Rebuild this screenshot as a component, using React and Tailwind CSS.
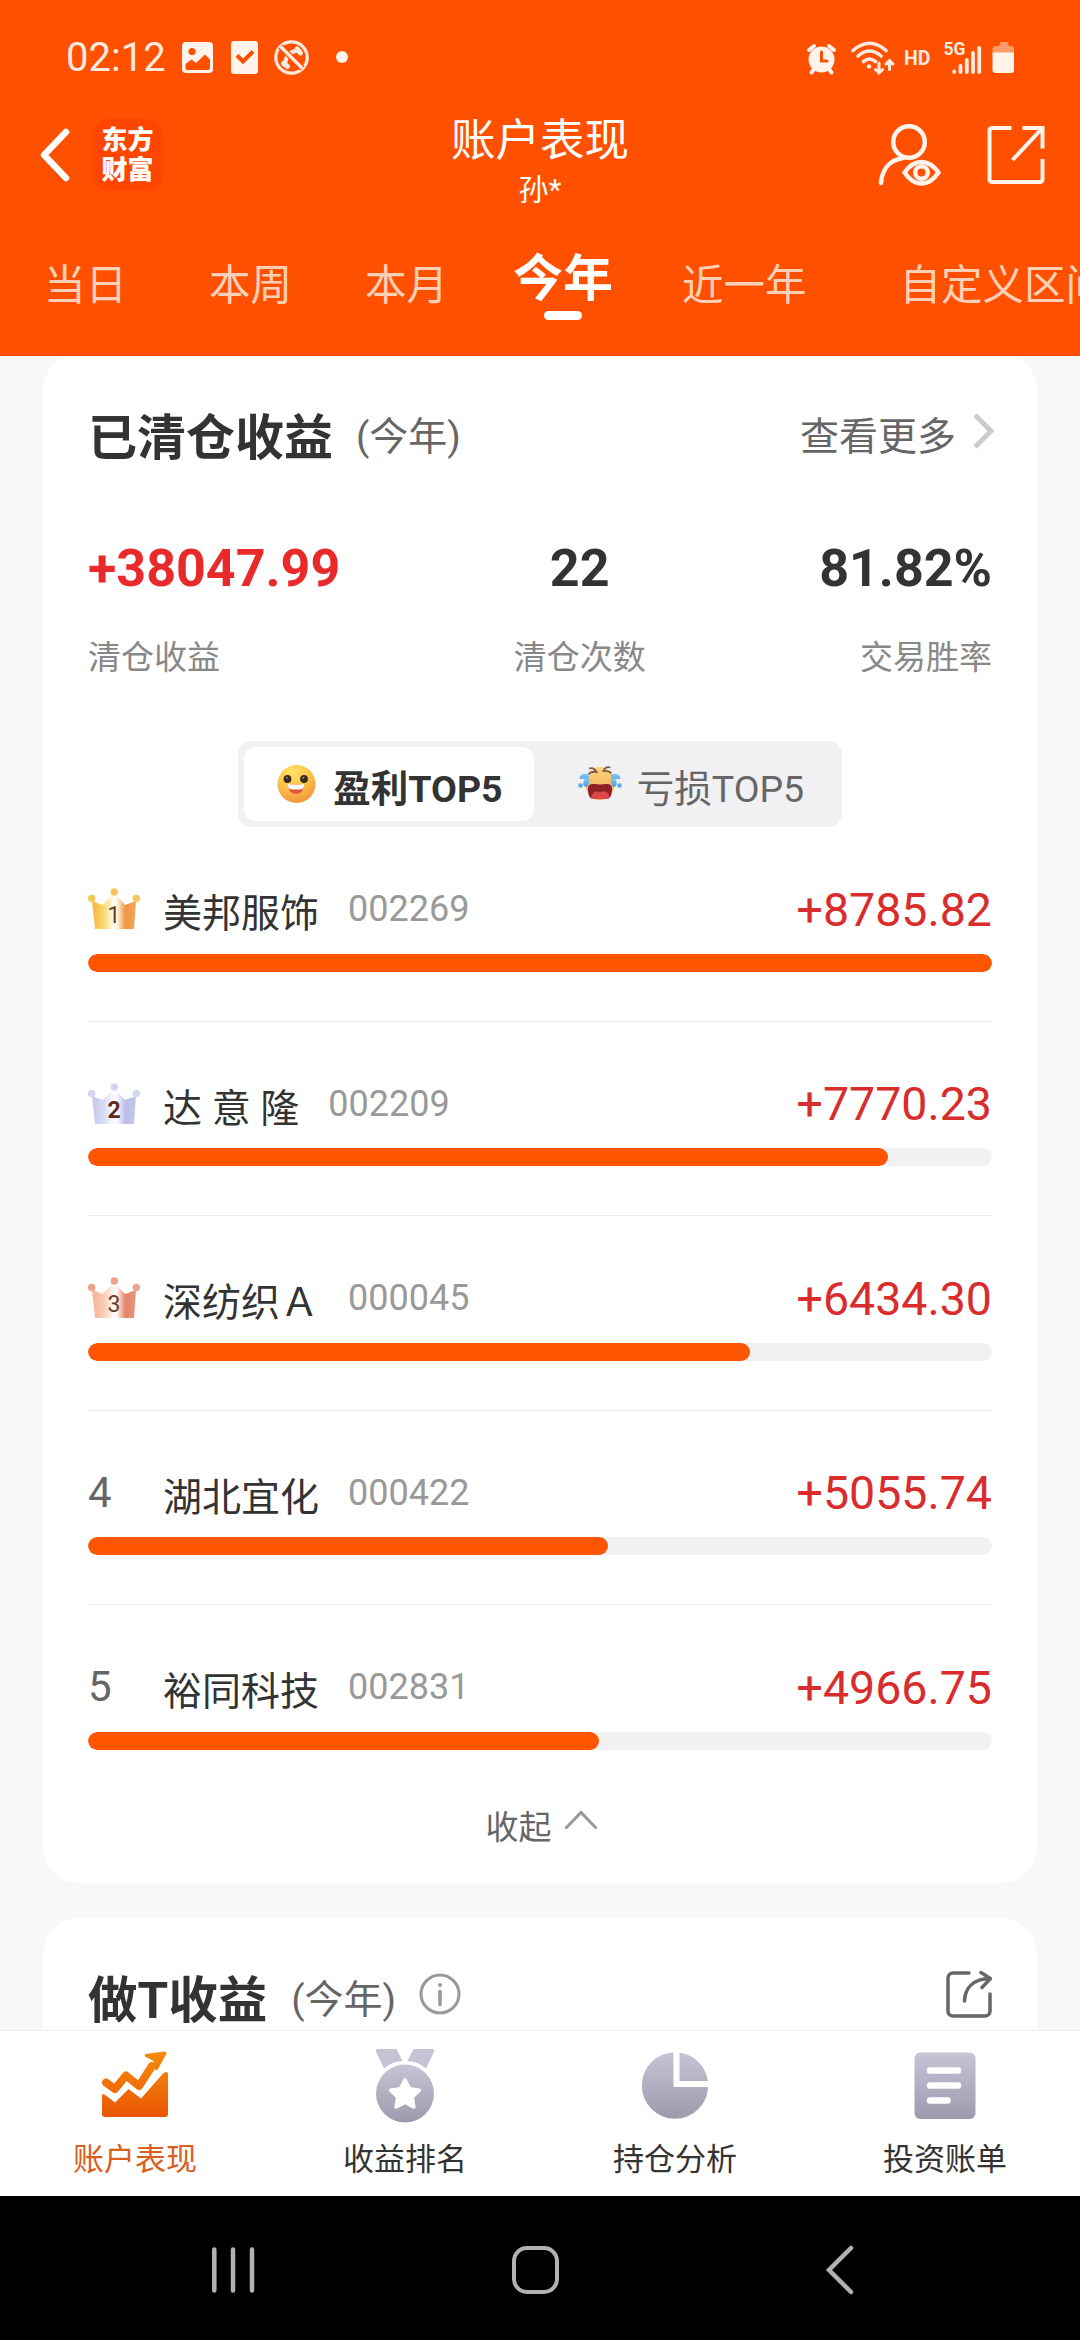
import clsx from 'clsx';

const tabs = [
  { label: '当日', className: 'ml-[44px]' },
  { label: '本周', className: 'ml-[82px]' },
  { label: '本月', className: 'ml-[73px]' },
  { label: '今年', className: 'ml-[65px]', active: true },
  { label: '近一年', className: 'ml-[69px]' },
  { label: '自定义区间', className: 'ml-[93px]' },
];

const summary = [
  { label: '清仓收益', value: '+38047.99', align: 'items-start', color: 'text-[#e92a2a]' },
  { label: '清仓次数', value: '22', align: 'items-center', color: 'text-[#333]' },
  { label: '交易胜率', value: '81.82%', align: 'items-end', color: 'text-[#333]' },
];

const stocks = [
  { name: '美邦服饰', code: '002269', profit: 8785.82 },
  { name: '达 意 隆', code: '002209', profit: 7770.23 },
  { name: '深纺织Ａ', code: '000045', profit: 6434.3 },
  { name: '湖北宜化', code: '000422', profit: 5055.74 },
  { name: '裕同科技', code: '002831', profit: 4966.75 },
];

const crowns = [
  { edge: '#f6b63c', soft: '#fbd873', mid: '#fffbe9', end: '#f0953f', ball: '#f5c65a', text: '#6b3a1f', weight: 400 },
  { edge: '#c3c8ea', soft: '#d9dcf4', mid: '#fbfbff', end: '#b9bde8', ball: '#d3d7f2', text: '#5a2a1c', weight: 700 },
  { edge: '#f5b293', soft: '#fbcdb4', mid: '#fff7f2', end: '#e58466', ball: '#eda48c', text: '#6b3a2c', weight: 400 },
];

function StatusIcons() {
  return (
    <svg width="210" height="44" viewBox="806 36 210 44" fill="none">
      {/* alarm */}
      <circle cx="821.5" cy="59.5" r="13" fill="#fff3ec" />
      <path d="M809 50l5-4M834 50l-5-4M811.500 72.500l3-4M831.500 72.500l-3-4" stroke="#fff3ec" strokeWidth="4" strokeLinecap="round" />
      <path d="M821.500 52v9h5.500" stroke="#ff5000" strokeWidth="3" strokeLinecap="round" />
      {/* wifi */}
      <g stroke="#ffeadf" strokeWidth="3.600" strokeLinecap="round">
        <path d="M853 50.500Q869.500 36 886 50.500" />
        <path d="M858 56Q869.500 46 881 56" />
        <path d="M863.500 61.500Q869.500 56.500 875.500 61.500" />
        <path d="M879 63v9.500M875.500 69.500l3.500 3.500 3.500-3.500M889.500 69.500V61M886 64l3.500-3.500L893 64" strokeWidth="3" />
      </g>
      <circle cx="869" cy="66.500" r="2.300" fill="#ffeadf" />
      <text x="904" y="65" fill="#ffeadf" fontFamily="Roboto" fontWeight="700" fontSize="19.500">HD</text>
      <text x="943.500" y="55" fill="#ffeadf" fontFamily="Roboto" fontWeight="700" fontSize="17.500">5G</text>
      <g stroke="#ffeadf" strokeWidth="3.800" strokeLinecap="round">
        <path d="M954.200 71.500v.5M960.500 66v6M966.800 60v12M973 53v19M979.200 48v24" />
      </g>
      {/* battery */}
      <path d="M999.500 46v-2a2 2 0 0 1 2-2h5a2 2 0 0 1 2 2v2h2.500a3 3 0 0 1 3 3v4h-21.500v-4a3 3 0 0 1 3-3z" fill="#ff9a6b" />
      <path d="M992.500 52.500H1014V70a3 3 0 0 1-3 3h-15.500a3 3 0 0 1-3-3z" fill="#fff3ec" />
    </svg>
  );
}

function NoticeIcons() {
  return (
    <svg width="168" height="38" viewBox="181 40 168 38" fill="none">
      <rect x="182" y="43" width="31" height="31" rx="4" fill="#fff3ec" />
      <circle cx="192" cy="52.500" r="3.600" fill="#ff5000" />
      <path d="M185.500 65l6-4.500 4.500 3.500 9-8.500 5 5V69a2 2 0 0 1-2 2h-20.500a2 2 0 0 1-2-2z" fill="#ff5000" />
      <rect x="231" y="42" width="27" height="33" rx="3" fill="#fff3ec" />
      <path d="M237 56.500l6 6 10-10" stroke="#ff5000" strokeWidth="4" />
      <circle cx="291.500" cy="58.500" r="15.700" stroke="#ffeadf" strokeWidth="3.200" />
      <path d="M285 67.500C285 57 290 51.500 300 51.500" stroke="#ffeadf" strokeWidth="4" />
      <path d="M283.500 64.500l4 3M297 50l3.500 4" stroke="#ffeadf" strokeWidth="5" strokeLinecap="round" />
      <path d="M280.500 47.500l22 22" stroke="#ff5000" strokeWidth="6" />
      <path d="M280.500 47.500l22 22" stroke="#ffeadf" strokeWidth="3.200" />
      <circle cx="342" cy="58" r="6" fill="#fff3ec" />
    </svg>
  );
}

function Crown({ rank }) {
  const c = crowns[rank - 1];
  const id = `crown${rank}`;
  return (
    <svg width="52" height="42" viewBox="0 0 52 42">
      <defs>
        <linearGradient id={id}>
          <stop offset="0" stopColor={c.edge} />
          <stop offset="0.280" stopColor={c.soft} />
          <stop offset="0.480" stopColor={c.mid} />
          <stop offset="0.560" stopColor={c.mid} />
          <stop offset="0.760" stopColor={c.end} />
          <stop offset="1" stopColor={c.end} stopOpacity="0.850" />
        </linearGradient>
      </defs>
      <path d="M4 13l11 4 11-12 11 12 11-4-2 28H7z" fill={`url(#${id})`} />
      <circle cx="3.700" cy="10.500" r="3.700" fill={c.ball} />
      <circle cx="26.300" cy="3.900" r="3.700" fill={c.ball} />
      <circle cx="48.300" cy="10.500" r="3.700" fill={c.ball} />
      <text x="26" y="34.500" textAnchor="middle" fontFamily="Roboto" fontSize="23" fontWeight={c.weight} fill={c.text}>{rank}</text>
    </svg>
  );
}

function HappyFace() {
  return (
    <svg width="39" height="40" viewBox="0 0 39 40">
      <defs>
        <radialGradient id="happy" cx="0.400" cy="0.200" r="0.850">
          <stop offset="0" stopColor="#ffe266" />
          <stop offset="0.500" stopColor="#fdc548" />
          <stop offset="1" stopColor="#f0903f" />
        </radialGradient>
      </defs>
      <circle cx="19.500" cy="20" r="19" fill="url(#happy)" />
      <circle cx="10.500" cy="15" r="3.900" fill="#3b2a1c" />
      <circle cx="27" cy="15" r="3.900" fill="#3b2a1c" />
      <circle cx="9.800" cy="13.800" r="1" fill="#a08a7a" />
      <circle cx="26.300" cy="13.800" r="1" fill="#a08a7a" />
      <path d="M11 20q8 1.500 16 0c0 6.500-3 9.800-8 9.800S11 26.500 11 20z" fill="#e2553a" />
      <path d="M11 20q8 1.500 16 0 .5 3-1.500 5-6.500 1-13 0Q10.500 23 11 20z" fill="#fff" />
    </svg>
  );
}

function CryFace() {
  return (
    <svg width="44" height="36" viewBox="0 0 44 36">
      <defs>
        <linearGradient id="cry" x2="0" y2="1">
          <stop offset="0" stopColor="#fbd27a" />
          <stop offset="1" stopColor="#f3a552" />
        </linearGradient>
        <linearGradient id="tear" x2="0" y2="1">
          <stop offset="0" stopColor="#84d0f8" />
          <stop offset="1" stopColor="#4a9de6" />
        </linearGradient>
      </defs>
      <ellipse cx="22" cy="17.500" rx="14.500" ry="16.500" fill="url(#cry)" />
      <path d="M11 2.500q5-1.500 7.500 3.500-5-1-8 2M32.500 1.500q-5-1.500-7 3.500 5-.5 8 2" fill="none" stroke="#7d5a4a" strokeWidth="1.800" />
      <path d="M10 22c0-3.500 3-4.500 6-4 3.500.5 8.500.5 12 0 3-.5 6 .5 6 4 0 5-1 10-3.500 10.500h-17C11 32 10 27 10 22z" fill="#8e2226" />
      <path d="M13 31c1-4 4-6 6.500-5.500q2.500 1.500 5 0C28 25 31 27 31.500 31q-1 2-3.500 2H16.500Q14 33 13 31z" fill="#dd4747" />
      <path d="M11 8.500C5 6.500 1.500 9 1.500 13c3-.5 7 .5 9 2z" fill="url(#tear)" />
      <path d="M33 8.500c6-2 9.500.5 9.500 4.500-3-.5-7 .5-9 2z" fill="url(#tear)" />
      <path d="M9.500 11c2.500 4 1.500 9-1.500 10-4-1-4-6 1.500-10zM34.500 11c-2.500 4-1.500 9 1.500 10 4-1 4-6-1.500-10z" fill="url(#tear)" />
      <circle cx="2.500" cy="19.500" r="2.300" fill="#5aa8ec" />
      <circle cx="41.500" cy="19.500" r="2.300" fill="#5aa8ec" />
    </svg>
  );
}

function StockRow({ stock, rank, last }) {
  const percent = (stock.profit / stocks[0].profit) * 100;
  return (
    <div className={clsx('pt-[57px]', !last && 'border-b border-[#ebebed] pb-[48.5px]')}>
      <div className="flex h-[50px] items-center">
        <div className="flex w-[75px] text-[42px] text-[#666]">
          {rank <= 3 ? <Crown rank={rank} /> : rank}
        </div>
        <span className="mt-[11px] text-[39px] whitespace-pre text-[#333]">{stock.name}</span>
        <span className="ml-[29px] text-[36px] text-[#999]">{stock.code}</span>
        <span className="mt-0.5 ml-auto text-[46.5px] text-[#d92c2c]">+{stock.profit.toFixed(2)}</span>
      </div>
      <div className="mt-[19.5px] mb-[0.5px] h-[18px] overflow-hidden rounded-full bg-[#f1f1f3]">
        <div className="h-full rounded-full bg-[#ff5500]" style={{ width: `${percent}%` }} />
      </div>
    </div>
  );
}

function NavGradient({ id, from = '#c6c5d6', to = '#9c9bad' }) {
  return (
    <linearGradient id={id} x2="0" y2="1">
      <stop offset="0" stopColor={from} />
      <stop offset="1" stopColor={to} />
    </linearGradient>
  );
}

const navItems = [
  {
    label: '账户表现',
    active: true,
    icon: (
      <svg width="68" height="74" viewBox="0 0 68 74">
        <defs>
          <linearGradient id="nav1" gradientUnits="userSpaceOnUse" x1="0" y1="3" x2="0" y2="69">
            <stop offset="0" stopColor="#f68c0c" />
            <stop offset="1" stopColor="#ea5504" />
          </linearGradient>
        </defs>
        <path d="M5 33.500L14 40 25 26.500 38 37 51 17" fill="none" stroke="url(#nav1)" strokeWidth="8" strokeLinecap="round" strokeLinejoin="round" />
        <path d="M44 7.500Q43 5 46 4.800L63 2.600Q66 2.500 65.300 5L57 20q-1.500 2-3 .5l-1.500-8.500z" fill="url(#nav1)" />
        <path d="M1 47q0-3 2.500-1.500L14 53.500 27.500 40 40 49.500 62.500 24q4.500-3 4.500 2V65a3 3 0 0 1-3 3H4a3 3 0 0 1-3-3z" fill="url(#nav1)" />
      </svg>
    ),
  },
  {
    label: '收益排名',
    icon: (
      <svg width="60" height="74" viewBox="0 0 60 74">
        <defs><NavGradient id="nav2" /></defs>
        <path d="M2.500 0H20a2 2 0 0 1 2 1l5.500 11Q16 12.500 9 19.500L.8 2.500Q.5 0 2.500 0zM57.500 0H40a2 2 0 0 0-2 1l-5.500 11Q44 12.500 51 19.500L59.200 2.500Q59.500 0 57.500 0z" fill="#c5c4d5" />
        <circle cx="30" cy="44.500" r="29" fill="url(#nav2)" />
        <path d="M30 30.500l4.700 9 10 1.600-7.100 7.200 1.500 10L30 53.700l-9.100 4.600 1.500-10-7.100-7.200 10-1.600z" fill="#fff" stroke="#fff" strokeWidth="3" strokeLinejoin="round" />
      </svg>
    ),
  },
  {
    label: '持仓分析',
    icon: (
      <svg width="68" height="74" viewBox="0 0 68 74">
        <defs><NavGradient id="nav3" /></defs>
        <circle cx="34" cy="36.500" r="33.200" fill="url(#nav3)" />
        <path d="M35.500 0v35H68" fill="none" stroke="#fff" strokeWidth="6" />
      </svg>
    ),
  },
  {
    label: '投资账单',
    icon: (
      <svg width="62" height="74" viewBox="0 0 62 74">
        <defs><NavGradient id="nav4" /></defs>
        <rect x="0.500" y="3.500" width="61" height="66.500" rx="6" fill="url(#nav4)" />
        <path d="M16 21.500h28M16 36.500h28M16 51.500h17.500" stroke="#fff" strokeWidth="6.500" strokeLinecap="round" />
      </svg>
    ),
  },
];

export default function App() {
  return (
    <div className="flex h-[2340px] w-[1080px] flex-col overflow-hidden bg-[#f6f8fa] font-['Roboto','Noto_Sans_CJK_SC',sans-serif] leading-none whitespace-nowrap">
      <header className="h-[356px] shrink-0 overflow-hidden bg-[#ff5000] text-white">
        <div className="flex h-[116px] items-center pr-[64px] pl-[66px]">
          <span className="w-[115px] text-[40px] text-[#ffeadf]">02:12</span>
          <NoticeIcons />
          <div className="ml-auto">
            <StatusIcons />
          </div>
        </div>

        <div className="grid h-[92px] grid-cols-[1fr_auto_1fr] items-start">
          <div className="flex h-[78px] items-center gap-[22px] pl-[39px]">
            <svg width="31" height="54" viewBox="0 0 31 54" fill="none">
              <path d="M27 4L5 27l22 23" stroke="#fff" strokeWidth="6.500" strokeLinecap="round" strokeLinejoin="round" />
            </svg>
            <div className="flex h-[72px] w-[71px] flex-col items-center justify-center rounded-[16px] bg-[#ff4600] text-[26px] leading-[30px] font-black">
              <span>东方</span>
              <span>财富</span>
            </div>
          </div>
          <div className="flex flex-col items-center">
            <h1 className="pt-[1.5px] text-[44.5px] leading-[46px]">账户表现</h1>
            <p className="mt-2 text-[30px] leading-[36px]">孙*</p>
          </div>
          <div className="flex h-[78px] items-center justify-end gap-[46px] pr-[35px]">
            <svg width="63" height="62" viewBox="878 123 63 62" fill="none" stroke="#fff3ec" strokeWidth="4.500" strokeLinecap="round">
              <circle cx="909" cy="141" r="15.800" />
              <path d="M881 182C882 169 889 159 903 157" />
              <path d="M904.500 171.500Q912 161 921.500 161T938.500 171.500Q931 182.500 921.500 182.500T904.500 171.500z" strokeLinejoin="round" />
              <circle cx="921.500" cy="171.500" r="6.300" />
            </svg>
            <svg width="58" height="60" viewBox="0 0 58 60" fill="none" stroke="#fff3ec" strokeWidth="4">
              <path d="M24.500 3H5a2.500 2.500 0 0 0-2.500 2.500v49A2.500 2.500 0 0 0 5 57H53a2.500 2.500 0 0 0 2.500-2.500V34M35.500 3h20v20.500M55 3.500L25.500 35" />
            </svg>
          </div>
        </div>

        <nav className="flex items-start">
          {tabs.map((tab) =>
            tab.active ? (
              <div key={tab.label} className={clsx('flex shrink-0 flex-col items-center pt-[47px]', tab.className)}>
                <span className="text-[50px] leading-[48px] font-bold">{tab.label}</span>
                <span className="mt-2 h-[9px] w-[38px] rounded-full bg-white" />
              </div>
            ) : (
              <span key={tab.label} className={clsx('shrink-0 pt-[57.5px] text-[41.5px] leading-[40px] text-[#ffd0b8]', tab.className)}>
                {tab.label}
              </span>
            )
          )}
        </nav>
      </header>

      <main className="min-h-0 flex-1 overflow-hidden px-[43px]">
        <section className="-mt-0.5 rounded-[36px] bg-white px-[45px] pt-[58px] pb-[37px]">
          <div className="flex h-[50px] items-center">
            <h2 className="mt-0.5 text-[49px] font-bold text-[#333]">已清仓收益</h2>
            <span className="ml-[23px] text-[39px] text-[#666]">(今年)</span>
            <span className="ml-auto text-[39px] text-[#666]">查看更多</span>
            <svg className="-mr-1 mb-3 ml-4" width="24" height="36" viewBox="0 0 24 36" fill="none">
              <path d="M3 2l16 16L3 34" stroke="#ccc" strokeWidth="5" />
            </svg>
          </div>

          <div className="mt-[79.5px] flex justify-between">
            {summary.map((item) => (
              <div key={item.label} className={clsx('flex flex-col', item.align)}>
                <span className={clsx('text-[52px] leading-[54px] font-bold', item.color)}>{item.value}</span>
                <span className="mt-[45px] text-[33px] leading-[34px] text-[#888]">{item.label}</span>
              </div>
            ))}
          </div>

          <div className="mx-auto mt-[66.5px] flex h-[86px] w-[604px] rounded-[13px] bg-[#f1f1f4] p-1.5 text-[37.5px]">
            <div className="flex w-[290px] items-center justify-center gap-[17px] rounded-[12px] bg-white pl-0.5 font-bold text-[#333]">
              <HappyFace />
              <span className="mt-[12px]">盈利TOP5</span>
            </div>
            <div className="flex flex-1 items-center justify-center gap-[15px] pl-3 text-[#666]">
              <CryFace />
              <span className="mt-[12px]">亏损TOP5</span>
            </div>
          </div>

          {stocks.map((stock, i) => (
            <StockRow key={stock.code} stock={stock} rank={i + 1} last={i === stocks.length - 1} />
          ))}

          <div className="mt-[60px] flex h-9 items-center justify-center gap-3 pl-[3px] text-[33px] text-[#666]">
            收起
            <svg className="mb-4" width="34" height="20" viewBox="0 0 34 20" fill="none">
              <path d="M1.500 18.500L17 2.500l15.500 16" stroke="#999" strokeWidth="3" />
            </svg>
          </div>
        </section>

        <section className="mt-[35px] h-[200px] rounded-[36px] bg-white px-[45px] pt-[58px]">
          <div className="flex h-[50px] items-center">
            <h2 className="mt-0.5 text-[49.5px] font-bold text-[#333]">做T收益</h2>
            <span className="ml-[24px] text-[39px] text-[#666]">(今年)</span>
            <svg className="mb-3.5 ml-[23px]" width="42" height="42" viewBox="0 0 42 42" fill="none" stroke="#999" strokeWidth="3">
              <circle cx="21" cy="21" r="19" />
              <path d="M21 18.500v13" strokeWidth="3.600" strokeLinecap="round" />
              <circle cx="21" cy="12" r="2" fill="#999" stroke="none" />
            </svg>
            <svg className="mb-3.5 ml-auto" width="46" height="48" viewBox="0 0 46 48" fill="none" stroke="#666" strokeWidth="3.500" strokeLinecap="round">
              <path d="M23 3H7a5 5 0 0 0-5 5V41a5 5 0 0 0 5 5H39a5 5 0 0 0 5-5V24" />
              <path d="M18.500 31C19 17 28 9 44 8.500M35 2.500l9.500 6-8.500 9" />
            </svg>
          </div>
        </section>
      </main>

      <nav className="grid h-[166px] shrink-0 grid-cols-4 border-t border-[#ebebeb] bg-white pt-[18px]">
        {navItems.map((item) => (
          <div key={item.label} className="flex flex-col items-center">
            {item.icon}
            <span className={clsx('mt-[19.5px] text-[31px] leading-[34px]', item.active ? 'text-[#d9601f]' : 'text-[#333]')}>
              {item.label}
            </span>
          </div>
        ))}
      </nav>

      <footer className="flex h-[144px] shrink-0 items-center gap-[257px] bg-black pt-1 pl-[211px]">
        <svg width="44" height="48" viewBox="0 0 44 48" stroke="#b2b2b2" strokeWidth="4.500" strokeLinecap="round">
          <path d="M3.300 3.500v41M22 3.500v41M41 3.500v41" />
        </svg>
        <div className="h-12 w-[47px] rounded-[15px] border-[4.5px] border-[#b2b2b2]" />
        <svg className="ml-[9px]" width="30" height="52" viewBox="0 0 30 52" fill="none" stroke="#b2b2b2" strokeWidth="4.500" strokeLinecap="round">
          <path d="M26 4L4 26l22 22" />
        </svg>
      </footer>
    </div>
  );
}
